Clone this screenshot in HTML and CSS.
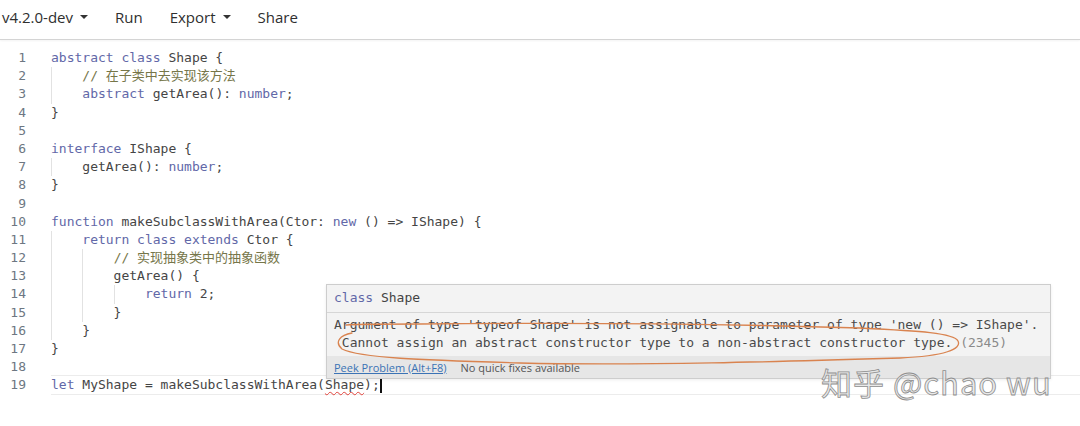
FILE: index.html
```html
<!DOCTYPE html>
<html lang="en">
<head>
    <meta charset="UTF-8">
    <title>TS Playground</title>
    <link rel="stylesheet" href="styles.css">
</head>
<body>
    <div class="navbar">
        <span class="nav-item">v4.2.0-dev <i class="caret"></i></span>
        <span class="nav-item">Run</span>
        <span class="nav-item">Export <i class="caret"></i></span>
        <span class="nav-item">Share</span>
    </div>

    <div class="editor">
        <div class="line"><span class="ln">1</span><span class="code"><span class="kw">abstract class</span> Shape {</span></div>
        <div class="line"><span class="ln">2</span><span class="code"><span class="guide g1"></span>    <span class="cm">// 在子类中去实现该方法</span></span></div>
        <div class="line"><span class="ln">3</span><span class="code"><span class="guide g1"></span>    <span class="kw">abstract</span> getArea(): <span class="kw">number</span>;</span></div>
        <div class="line"><span class="ln">4</span><span class="code">}</span></div>
        <div class="line"><span class="ln">5</span><span class="code"></span></div>
        <div class="line"><span class="ln">6</span><span class="code"><span class="kw">interface</span> IShape {</span></div>
        <div class="line"><span class="ln">7</span><span class="code"><span class="guide g1"></span>    getArea(): <span class="kw">number</span>;</span></div>
        <div class="line"><span class="ln">8</span><span class="code">}</span></div>
        <div class="line"><span class="ln">9</span><span class="code"></span></div>
        <div class="line"><span class="ln">10</span><span class="code"><span class="kw">function</span> makeSubclassWithArea(Ctor: <span class="kw">new</span> () =&gt; IShape) {</span></div>
        <div class="line"><span class="ln">11</span><span class="code"><span class="guide g1"></span>    <span class="kw">return class extends</span> Ctor {</span></div>
        <div class="line"><span class="ln">12</span><span class="code"><span class="guide g1"></span><span class="guide g2"></span>        <span class="cm">// 实现抽象类中的抽象函数</span></span></div>
        <div class="line"><span class="ln">13</span><span class="code"><span class="guide g1"></span><span class="guide g2"></span>        getArea() {</span></div>
        <div class="line"><span class="ln">14</span><span class="code"><span class="guide g1"></span><span class="guide g2"></span><span class="guide g3"></span>            <span class="kw">return</span> 2;</span></div>
        <div class="line"><span class="ln">15</span><span class="code"><span class="guide g1"></span><span class="guide g2"></span>        }</span></div>
        <div class="line"><span class="ln">16</span><span class="code"><span class="guide g1"></span>    }</span></div>
        <div class="line"><span class="ln">17</span><span class="code">}</span></div>
        <div class="line"><span class="ln">18</span><span class="code"></span></div>
        <div class="line current"><span class="ln">19</span><span class="code"><span class="kw">let</span> MyShape = makeSubclassWithArea(<span class="squiggle">Shape</span>);<span class="cursor"></span></span></div>

        <div class="hover">
            <div class="hover-head"><span class="kw">class</span> Shape</div>
            <div class="hover-body">
                <div class="msg">Argument of type 'typeof Shape' is not assignable to parameter of type 'new () =&gt; IShape'.</div>
                <div class="msg"> Cannot assign an abstract constructor type to a non-abstract constructor type. <span class="code-num">(2345)</span></div>
            </div>
            <div class="hover-status">
                <a class="peek">Peek Problem (Alt+F8)</a>
                <span class="no-fix">No quick fixes available</span>
            </div>
        </div>
    </div>

    <svg class="scribble" width="1080" height="426" viewBox="0 0 1080 426">
        <path d="M352 333 C 340 335, 334 342, 342 349 C 360 358, 420 360, 520 363 C 640 366, 800 361, 900 358 C 945 356, 962 349, 958 341 C 954 333, 920 331, 860 328 C 700 323, 520 323, 420 324 C 380 324, 350 324, 346 325"
              fill="none" stroke="#d9834f" stroke-width="1.3" stroke-linecap="round"/>
    </svg>

    <div class="watermark">知乎 @chao wu</div>
</body>
</html>
```

FILE: styles.css
```css
body {
    margin: 0;
    background: #fff;
    font-family: "Open Sans", "Noto Sans", sans-serif;
    color: #333;
    position: relative;
    height: 426px;
    overflow: hidden;
}
.navbar {
    display: flex;
    align-items: center;
    gap: 27px;
    height: 39px;
    padding-left: 2px;
    border-bottom: 1px solid #d4d4d4;
    box-shadow: 0 1px 2px rgba(0,0,0,0.05);
    font-size: 15px;
    color: #2f2f2f;
}
.nav-item {
    display: flex;
    align-items: center;
    gap: 7px;
    margin-top: -5px;
}
.caret {
    display: inline-block;
    width: 0;
    height: 0;
    border-left: 4px solid transparent;
    border-right: 4px solid transparent;
    border-top: 4px solid #333;
}
.editor {
    position: relative;
    padding-top: 9px;
    font-family: "DejaVu Sans Mono", "Noto Sans CJK SC", monospace;
    font-size: 13px;
    color: #454545;
}
.line {
    display: flex;
    height: 18.2px;
    line-height: 18.2px;
}
.ln {
    width: 26px;
    text-align: right;
    color: #6d7782;
    margin-right: 25px;
    flex-shrink: 0;
}
.code {
    position: relative;
    white-space: pre;
    flex: 1;
}
.line.current .code {
    border-top: 1px solid #ececec;
    border-bottom: 1px solid #ececec;
    margin-top: -1px;
}
.kw {
    color: #6268a8;
}
.cm {
    color: #767649;
}
.code-num {
    color: #8a8a8a;
}
.guide {
    position: absolute;
    top: 0;
    bottom: 0;
    width: 1px;
    background: #e2e2e2;
}
.g1 { left: 0; }
.g2 { left: 31.3px; }
.g3 { left: 62.6px; }
.squiggle {
    text-decoration: underline wavy #e0413a;
    text-decoration-thickness: 1px;
    text-underline-offset: 2px;
}
.cursor {
    display: inline-block;
    width: 2px;
    height: 17px;
    background: #111;
    vertical-align: -4px;
}
.hover {
    position: absolute;
    left: 326px;
    top: 244px;
    width: 723px;
    border: 1px solid #cdcdcd;
    background: #f3f3f3;
    box-shadow: 0 1px 3px rgba(0,0,0,0.08);
}
.hover-head {
    height: 27px;
    line-height: 26px;
    padding-left: 7px;
    border-bottom: 1px solid #d6d6d6;
    color: #444;
}
.hover-body {
    padding: 3px 7px 4px;
    line-height: 18px;
    color: #4a4a4a;
}
.msg {
    white-space: pre;
}
.hover-status {
    display: flex;
    gap: 14px;
    align-items: center;
    height: 22px;
    padding-left: 7px;
    background: #e6e6e6;
    font-family: "Open Sans", "Noto Sans", sans-serif;
    font-size: 11px;
}
.peek {
    color: #3b73b5;
    text-decoration: underline;
}
.no-fix {
    color: #555;
}
.scribble {
    position: absolute;
    left: 0;
    top: 0;
    pointer-events: none;
}
.watermark {
    position: absolute;
    left: 821px;
    top: 359px;
    font-family: "Noto Sans CJK SC", "Noto Sans", sans-serif;
    font-size: 31px;
    color: rgba(230,230,230,0.85);
    -webkit-text-stroke: 0.8px #8e8e8e;
    letter-spacing: 1px;
}
```
